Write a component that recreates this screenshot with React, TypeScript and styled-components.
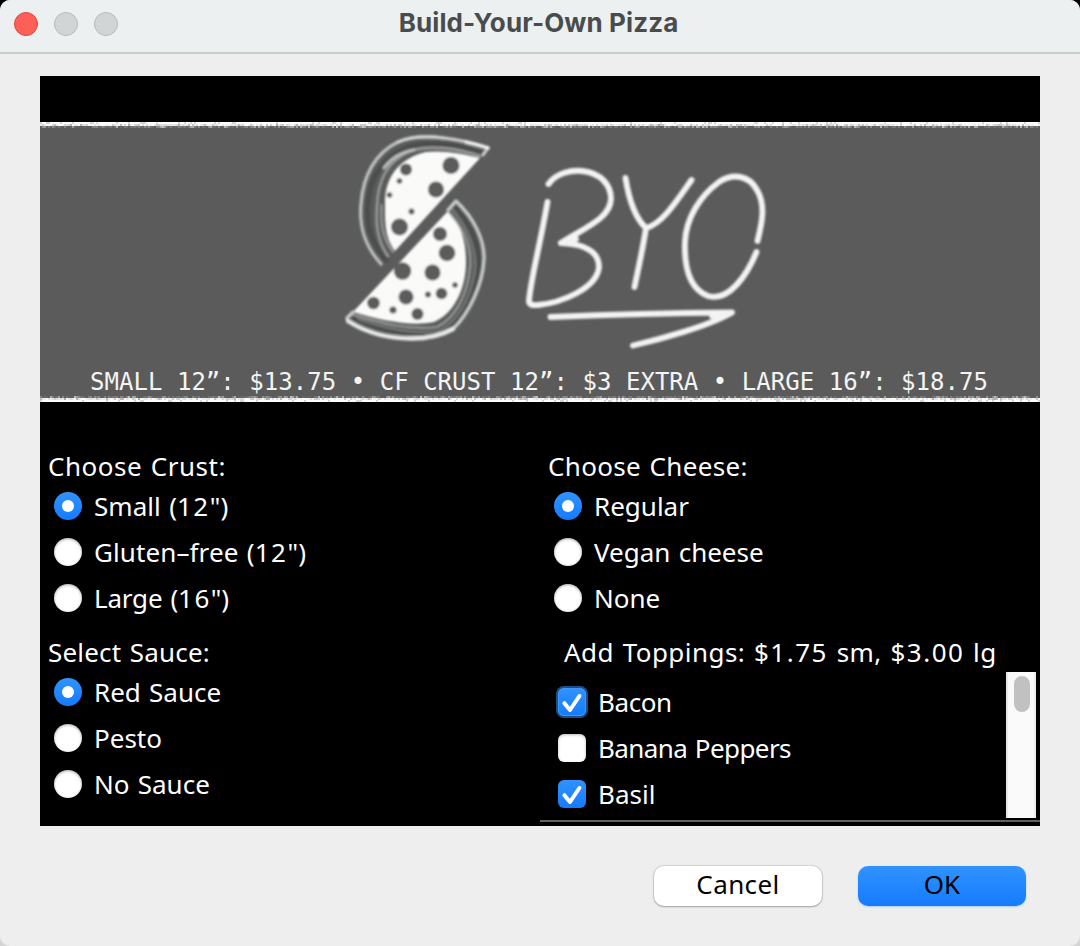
import React from "react";
import styled, { createGlobalStyle } from "styled-components";

const Global = createGlobalStyle`
  html { background: linear-gradient(#000 50%, #d4d4d4 50%) no-repeat; height: 946px; }
  body { margin: 0; padding: 0; }
  * { box-sizing: border-box; }
`;

const UI_FONT = `"Noto Sans", "Open Sans", sans-serif`;

const Window = styled.div`
  width: 1080px;
  height: 946px;
  display: flex;
  flex-direction: column;
  background: #eeeeee;
  border-radius: 10px;
  overflow: hidden;
  font-family: ${UI_FONT};
`;

const TitleBar = styled.header`
  flex: none;
  height: 54px;
  display: grid;
  grid-template-columns: 1fr auto 1fr;
  align-items: center;
  padding: 0 14px 4px;
  background: #ecf0f1;
  border-bottom: 2px solid #cccccd;
`;

const Lights = styled.div`
  display: flex;
  gap: 16px;
`;

const Light = styled.span<{ $active?: boolean }>`
  width: 24px;
  height: 24px;
  border-radius: 50%;
  background: ${(p) => (p.$active ? "#fe5f57" : "#d1d5d5")};
  border: 1px solid ${(p) => (p.$active ? "#e2463f" : "#b5b9b9")};
`;

const Title = styled.h1`
  margin: 0;
  padding: 0 3px 2px 0;
  font: 700 26px/30px Inter, sans-serif;
  letter-spacing: 0.1px;
  color: #4a4c4c;
  white-space: nowrap;
`;

const Panel = styled.main`
  flex: none;
  height: 750px;
  margin: 22px 40px 0;
  padding-top: 46px;
  background: #000;
  color: #fff;
`;

const Banner = styled.section`
  height: 280px;
  display: flex;
  flex-direction: column;
  background: #5b5b5b;
`;

const Art = styled.svg`
  display: block;
  flex: none;
`;

const Prices = styled.p`
  margin: 0;
  height: 31px;
  padding: 2px 0 0 50px;
  font: 24px/31px "DejaVu Sans Mono", monospace;
  letter-spacing: 0.035px;
  color: #f4f4f4;
  white-space: pre;
`;

const Options = styled.div`
  display: grid;
  grid-template-columns: 500px 500px;
  grid-template-rows: 186px 190px;
  padding-top: 47px;
`;

const Group = styled.section`
  display: flex;
  flex-direction: column;
`;

const Text = styled.span<{ $ls?: number }>`
  font-size: 26px;
  line-height: 34px;
  letter-spacing: ${(p) => p.$ls ?? 0}px;
  word-spacing: 1.5px;
  white-space: nowrap;
`;

const Figures = styled.span`
  letter-spacing: 1.5px;
`;

const Heading = styled.div<{ $indent?: boolean }>`
  height: 34px;
  padding-left: ${(p) => (p.$indent ? 24 : 8)}px;
`;

const Row = styled.label<{ $check?: boolean }>`
  flex: none;
  display: flex;
  align-items: center;
  gap: 12px;
  height: 46px;
  padding-left: ${(p) => (p.$check ? 18 : 14)}px;
`;

const BLUE = "linear-gradient(#3193ff, #147bfe)";

const RadioMark = styled.span<{ $on?: boolean }>`
  width: 28px;
  height: 28px;
  display: flex;
  align-items: center;
  justify-content: center;
  border-radius: 50%;
  background: ${(p) => (p.$on ? BLUE : "#fff")};
  box-shadow: ${(p) => (p.$on ? "none" : "inset 0 1px 3px rgba(0,0,0,.35)")};
  &::after {
    content: "";
    width: 12px;
    height: 12px;
    border-radius: 50%;
    background: #fff;
    display: ${(p) => (p.$on ? "block" : "none")};
  }
`;

const CheckMark = styled.span<{ $on?: boolean; $focus?: boolean }>`
  width: 28px;
  height: 28px;
  border-radius: 6px;
  background: ${(p) => (p.$on ? BLUE : "#fff")};
  box-shadow: ${(p) =>
    p.$focus
      ? "0 0 0 2px #1b4f86, inset 0 0 0 1px #3f97fb"
      : p.$on
        ? "none"
        : "inset 0 1px 3px rgba(0,0,0,.28)"};
  svg { display: block; }
`;

const ScrollPane = styled.div`
  display: flex;
  justify-content: space-between;
  height: 150px;
  margin-top: 3px;
  padding-right: 4px;
  border-bottom: 2px solid #606060;
`;

const List = styled.div`
  padding-top: 7px;
  height: 146px;
`;

const Track = styled.div`
  width: 30px;
  height: 146px;
  padding: 4px 4px 0 6px;
  background: #fafafa;
  border-left: 2px solid #e8e8e8;
  border-right: 2px solid #ededed;
`;

const Thumb = styled.div`
  width: 16px;
  height: 36px;
  border-radius: 8px;
  background: #c1c1c1;
`;

const Footer = styled.footer`
  display: flex;
  justify-content: flex-end;
  gap: 36px;
  padding: 40px 54px 0 0;
`;

const Button = styled.button<{ $primary?: boolean }>`
  width: 168px;
  height: 40px;
  padding: 0 0 5px;
  border: 0;
  border-radius: 10px;
  color: #000;
  font-family: ${UI_FONT};
  background: ${(p) => (p.$primary ? BLUE : "#fff")};
  box-shadow: ${(p) =>
    p.$primary
      ? "0 1px 2px rgba(20,123,254,.3)"
      : "0 0 1px 1px rgba(0,0,0,.1), 0 1px 2px rgba(0,0,0,.25)"};
`;

type Item = { text: string; ls?: number; on?: boolean; focus?: boolean };

const crust: Item[] = [
  { text: 'Small (12")', on: true, ls: 0.05 },
  { text: 'Gluten–free (12")', ls: 0.1 },
  { text: 'Large (16")', ls: -0.2 },
];
const cheese: Item[] = [{ text: "Regular", on: true }, { text: "Vegan cheese" }, { text: "None" }];
const sauce: Item[] = [{ text: "Red Sauce", on: true }, { text: "Pesto" }, { text: "No Sauce" }];
const toppings: Item[] = [
  { text: "Bacon", on: true, focus: true, ls: -0.4 },
  { text: "Banana Peppers", ls: -0.6 },
  { text: "Basil", on: true },
];

/* Figures are set wider than the words around them. */
function Caption({ text, ls }: { text: string; ls?: number }) {
  return (
    <Text $ls={ls}>
      {text.split(/([$\d.]+)/).map((part, i) => (i % 2 ? <Figures key={i}>{part}</Figures> : part))}
    </Text>
  );
}

function RadioGroup({ title, ls, items }: { title: string; ls?: number; items: Item[] }) {
  return (
    <Group>
      <Heading><Caption text={title} ls={ls} /></Heading>
      {items.map((i) => (
        <Row key={i.text}>
          <RadioMark $on={i.on} />
          <Caption text={i.text} ls={i.ls} />
        </Row>
      ))}
    </Group>
  );
}

/* Rough chalk edge: 2px specks, darker towards the inside of the banner. */
function ChalkEdge({ flip }: { flip?: boolean }) {
  let seed = flip ? 91 : 17;
  const rnd = () => (seed = (seed * 16807) % 2147483647) / 2147483647;
  const cells: React.ReactNode[] = [];
  for (let x = 0; x < 1000; x += 2) {
    const tones = [
      rnd() < 0.12 ? 215 : 253,
      Math.round(252 - rnd() * rnd() * 90),
      Math.round(92 + rnd() * rnd() * 110),
    ];
    tones.forEach((t, r) => {
      cells.push(
        <rect key={`${x}-${r}`} x={x} y={(flip ? 2 - r : r) * 2} width="2" height="2" fill={`rgb(${t},${t},${t})`} />
      );
    });
  }
  return <Art width="1000" height="6" viewBox="0 0 1000 6" shapeRendering="crispEdges">{cells}</Art>;
}

const holes: [number, number, number][] = [
  [406, 169.5, 6], [451, 165.5, 8.5], [436, 189.5, 8], [399.5, 181, 2.8], [389.5, 195, 2.8],
  [411.5, 211.5, 3], [399.5, 227, 8.5], [440, 234, 7], [447, 253, 8.3], [402.5, 271, 8.7],
  [432.5, 272.5, 8], [406, 297, 7.5], [373.5, 303, 6.3], [393, 310, 3.6], [417.5, 314, 6],
  [428, 294.5, 3], [441.5, 293.5, 5.8], [455, 285, 2.8],
];

function Logo() {
  return (
    <Art width="1000" height="237" viewBox="40 128 1000 237" fill="none" strokeLinecap="round" strokeLinejoin="round">
      <defs>
        <filter id="soft" x="-5%" y="-5%" width="110%" height="110%">
          <feGaussianBlur stdDeviation="0.9" />
        </filter>
      </defs>
      <g filter="url(#soft)">
        <path d="M386 260 C369 240 366 222 368 202 C370 176 384 157 406 148 C428 140 458 144 482 153" stroke="#4c4e4d" strokeWidth="5" />
        <path d="M452 203 C470 222 481 246 479 268 C474 296 462 320 442 331 C414 338 380 330 354 318" stroke="#4c4e4d" strokeWidth="5" />
        <path d="M381 264 C364 245 359 226 361 204 C363 176 375 153 398 142 C412 136 428 136 444 138" stroke="#bfc4c3" strokeWidth="3.2" />
        <path d="M398 142 C412 136 428 136 444 138 C462 140 476 144 488 148 L483 155" stroke="#d0d4d3" strokeWidth="3" />
        <path d="M466 142 C475 144 482 146 488 148" stroke="#eef0ef" strokeWidth="3.6" />
        <path d="M388 256 C376 239 376 222 377 206 C378 180 387 161 411 151 C430 145 456 148 480 156" stroke="#9b9f9e" strokeWidth="2.4" />
        <path d="M384 168 C392 157 402 152 414 150" stroke="#b9bdbc" strokeWidth="3" />
        <path d="M393 252 C381 236 381 222 381.5 205" stroke="#a4a8a7" strokeWidth="1.8" />
        <path d="M480 158 L395 251 C384 237 385 220 385 200 C386 176 400 158 426 152 C444 150 464 154 480 158Z" fill="#fafaf9" />
        <path d="M353 312 L448 211 C462 225 466 243 466 262 C466 290 453 314 434 322 C410 327 381 320 353 312Z" fill="#fafaf9" />
        <path d="M448 211 C464 228 472 248 470 268 C467 297 454 319 437 327 C408 331 378 322 354 315" stroke="#969a99" strokeWidth="2.2" />
        <path d="M450 207 C464 222 477 247 475 270 C471 300 456 324 438 331 C414 335 388 329 358 319" stroke="#747877" strokeWidth="2" />
        <path d="M448 210 L456 201 C472 216 485 238 484 260 C483 283 470 313 453 329 C426 344 379 341 348 321 L347 318 L353 312" stroke="#c9cdcc" strokeWidth="3.3" />
        <path d="M453 329 C426 344 379 341 348 321" stroke="#e6e9e8" strokeWidth="4.4" />
        {holes.map(([cx, cy, r]) => (
          <circle key={`${cx}-${cy}`} cx={cx} cy={cy} r={r} fill="#5b5b5b" />
        ))}
        <g stroke="#f3f3f3" strokeWidth="5.9">
          <path d="M548.5 184 C556 173 571 170 582 171 C602 173 611 186 611 199 C610 218 588 226 561 243 C585 244 599 252 599 267 C597 289 560 303 538 305 Q529 306 529 301 C530 283 540 245 547.5 202" />
          <path d="M625.5 178 C629 200 635 218 646 228 C662 224 676 202 691.5 180 M646 228 C643 248 638 270 634.5 287" />
          <path d="M757.5 241 C762 223 766 205 757 190 C749 175 733 173 719 182 C700 196 686 218 685 242 C684 270 690 289 708 296 C729 302 747 275 756.5 252" />
          <path d="M550.5 317 C600 315 670 313 732 312.5 C709 326 661 339 633 345.5" />
          <path d="M561 243 L576 239" />
          <path d="M712 316 L728 313" />
        </g>
      </g>
    </Art>
  );
}

function Tick() {
  return (
    <svg width="28" height="28" viewBox="0 0 28 28">
      <path d="M6.4 15.2 L12 22 L21.4 8" fill="none" stroke="#fff" strokeWidth="4" strokeLinecap="round" strokeLinejoin="round" />
    </svg>
  );
}

export default function App() {
  return (
    <>
      <Global />
      <Window>
        <TitleBar>
          <Lights><Light $active /><Light /><Light /></Lights>
          <Title>Build-Your-Own Pizza</Title>
        </TitleBar>
        <Panel>
          <Banner>
            <ChalkEdge />
            <Logo />
            <Prices>SMALL 12”: $13.75 • CF CRUST 12”: $3 EXTRA • LARGE 16”: $18.75</Prices>
            <ChalkEdge flip />
          </Banner>
          <Options>
            <RadioGroup title="Choose Crust:" ls={0.5} items={crust} />
            <RadioGroup title="Choose Cheese:" ls={0.32} items={cheese} />
            <RadioGroup title="Select Sauce:" ls={0.19} items={sauce} />
            <Group>
              <Heading $indent><Caption text="Add Toppings: $1.75 sm, $3.00 lg" ls={0.45} /></Heading>
              <ScrollPane>
                <List>
                  {toppings.map((i) => (
                    <Row key={i.text} $check>
                      <CheckMark $on={i.on} $focus={i.focus}>{i.on && <Tick />}</CheckMark>
                      <Caption text={i.text} ls={i.ls} />
                    </Row>
                  ))}
                </List>
                <Track><Thumb /></Track>
              </ScrollPane>
            </Group>
          </Options>
        </Panel>
        <Footer>
          <Button><Text $ls={0.4}>Cancel</Text></Button>
          <Button $primary><Text>OK</Text></Button>
        </Footer>
      </Window>
    </>
  );
}
